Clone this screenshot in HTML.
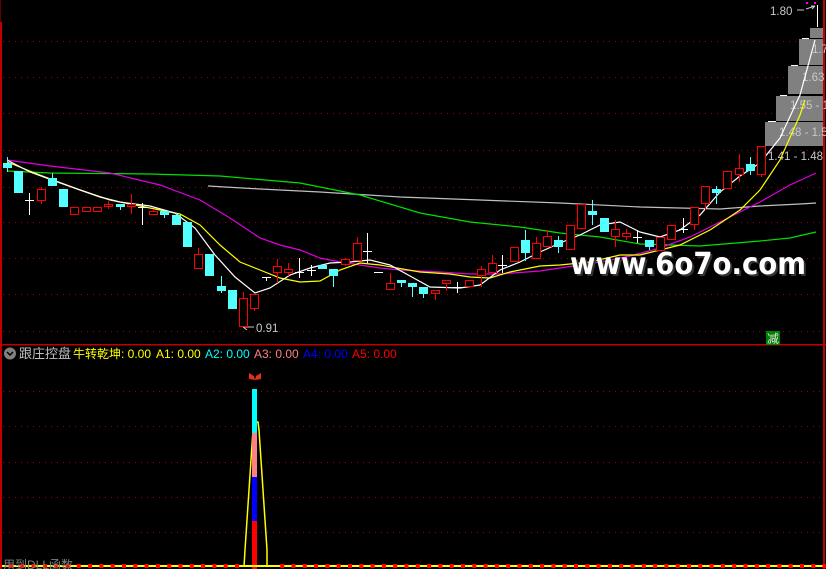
<!DOCTYPE html>
<html><head><meta charset="utf-8"><style>
html,body{margin:0;padding:0;background:#000;}
body{width:826px;height:569px;overflow:hidden;position:relative;font-family:"Liberation Sans","Noto Sans CJK SC",sans-serif;}
svg{position:absolute;left:0;top:0;}
</style></head><body>
<svg width="826" height="569" viewBox="0 0 826 569" xmlns="http://www.w3.org/2000/svg">
<g stroke="#a00000" stroke-width="1" stroke-dasharray="1,5">
<line x1="3" y1="41.5" x2="824" y2="41.5"/><line x1="3" y1="77.5" x2="824" y2="77.5"/>
<line x1="3" y1="113.5" x2="824" y2="113.5"/><line x1="3" y1="150.5" x2="824" y2="150.5"/>
<line x1="3" y1="187.5" x2="824" y2="187.5"/><line x1="3" y1="222.5" x2="824" y2="222.5"/>
<line x1="3" y1="258.5" x2="824" y2="258.5"/><line x1="3" y1="294.5" x2="824" y2="294.5"/>
<line x1="3" y1="331.5" x2="824" y2="331.5"/>
<line x1="3" y1="391.5" x2="824" y2="391.5"/><line x1="3" y1="426.5" x2="824" y2="426.5"/>
<line x1="3" y1="462.5" x2="824" y2="462.5"/><line x1="3" y1="497.5" x2="824" y2="497.5"/>
<line x1="3" y1="532.5" x2="824" y2="532.5"/>
</g>
<rect x="0" y="22" width="2" height="547" fill="#c00000"/>
<rect x="0" y="0" width="1" height="22" fill="#600000"/>
<rect x="823" y="0" width="2" height="569" fill="#c00000"/>
<rect x="0" y="344" width="826" height="1.5" fill="#c00000"/>

<g fill="#808080">
<rect x="810" y="28" width="13" height="10"/>
<rect x="799" y="39" width="24" height="26"/>
<rect x="788" y="66" width="35" height="28"/>
<rect x="776" y="96" width="47" height="25"/>
<rect x="765" y="122" width="58" height="24"/>
</g>
<g stroke="#fff" stroke-width="1">
<line x1="802" y1="38.5" x2="809" y2="38.5"/><line x1="791" y1="65.5" x2="798" y2="65.5"/>
<line x1="780" y1="95.5" x2="787" y2="95.5"/><line x1="768" y1="121.5" x2="776" y2="121.5"/>
<line x1="817.5" y1="5" x2="817.5" y2="27"/>
</g>
<path d="M797 10 H804 M806 9 L815 6 M815 6 l-4 0 M815 6 l-3 3" stroke="#c8c8c8" fill="none"/>
<g fill="#c8c8c8" font-size="11.5" font-family="Liberation Sans,sans-serif">
<text x="770" y="15">1.80</text>
<text x="812" y="53">1.7</text>
<text x="802" y="81">1.63</text>
<text x="790" y="109">1.55 - 1</text>
<text x="779" y="136">1.48 - 1.5</text>
<text x="768" y="160">1.41 - 1.48</text>
<text x="256" y="332">0.91</text>
</g>
<path d="M243 327 H254 M243 327 l4 -3 M243 327 l4 3" stroke="#c8c8c8" fill="none"/>
<rect x="806" y="2" width="2" height="2" fill="#f0f"/><rect x="814" y="2" width="2" height="2" fill="#f0f"/>

<g fill="none" stroke-width="1.2">
<polyline stroke="#c0c0c0" points="208,186 260,189 320,192 400,197 480,200 560,203 640,207 680,208 720,209 760,206 800,204 816,203"/>
<polyline stroke="#00e000" points="7,171 50,173 150,174 220,176 300,183 360,195 420,213 470,222 520,227 560,233 600,237 640,244 700,246 760,241 790,238 816,232"/>
<polyline stroke="#e000e0" points="7,160 50,166 110,173 160,185 200,200 230,218 260,238 280,245 300,250 320,258 340,262 360,265 380,268 400,270 440,272 470,274 500,274 540,271 560,268 600,262 630,256 660,248 690,237 720,222 760,202 790,185 816,173"/>
<polyline stroke="#ffff00" points="7,162 40,175 80,190 110,200 150,208 180,214 200,225 220,245 240,262 260,270 280,278 300,282 320,281 340,270 360,263 380,265 420,272 450,274 470,277 490,278 510,272 540,266 560,265 590,262 620,255 640,255 680,245 710,230 740,210 760,190 780,160 800,115 805,100"/>
<polyline stroke="#ffffff" points="7,160 30,172 52,180 100,197 120,202 150,206 175,213 195,228 215,255 235,277 255,293 270,288 290,275 310,268 330,263 350,262 370,260 390,265 410,276 430,287 460,288 480,285 500,270 520,262 540,252 560,243 580,235 600,225 620,222 640,232 660,237 680,230 700,215 720,192 740,176 760,163 780,138 800,95 815,40"/>
</g>

<g id="c"></g>

<text x="572" y="276" font-family="DejaVu Sans,sans-serif" font-weight="bold" font-size="30" fill="#333" textLength="236" lengthAdjust="spacingAndGlyphs">www.6o7o.com</text>
<text x="570" y="274" font-family="DejaVu Sans,sans-serif" font-weight="bold" font-size="30" fill="#fff" textLength="236" lengthAdjust="spacingAndGlyphs">www.6o7o.com</text>
<rect x="766" y="331" width="14" height="14" fill="#008000"/>
<text x="767" y="343" font-size="12" fill="#e0e0e0" font-family="Noto Sans CJK SC,sans-serif">减</text>

<circle cx="10" cy="353.5" r="6" fill="#808080"/>
<path d="M7 352 l3 3 l3 -3" stroke="#000" stroke-width="1.5" fill="none"/>
<g font-size="12" font-family="Liberation Sans,Noto Sans CJK SC,sans-serif">
<text x="19" y="358" fill="#c0c0c0" font-size="13">跟庄控盘</text>
<text x="73" y="358" fill="#ffff00">牛转乾坤: 0.00</text>
<text x="156" y="358" fill="#ffff00">A1: 0.00</text>
<text x="205" y="358" fill="#00ffff">A2: 0.00</text>
<text x="254" y="358" fill="#ff8080">A3: 0.00</text>
<text x="303" y="358" fill="#0000ff">A4: 0.00</text>
<text x="352" y="358" fill="#ff0000">A5: 0.00</text>
</g>

<path d="M249 373 l5 3 l1 4 l-6 -1 z M261 373 l-5 3 l-1 4 l6 -1 z" fill="#e03020"/>
<polyline fill="none" stroke="#ffff00" stroke-width="1.5" points="244,567 245,550 246,535 247,520 248,505 249,490 250,475 251,460 252,445 253,430 254,422 258,422 259,430 260,445 261,460 262,475 263,490 264,505 265,520 266,535 267,550 267,567"/>
<rect x="252" y="389" width="5" height="45" fill="#00ffff"/>
<rect x="252" y="433" width="5" height="45" fill="#ff8080"/>
<rect x="252" y="477" width="5" height="45" fill="#0000ff"/>
<rect x="252" y="521" width="5" height="48" fill="#ff0000"/>
<rect x="2" y="565" width="821" height="2" fill="#ffff00"/>
<g id="sq" fill="#ff0000"></g>
<text x="3" y="569" font-size="12" fill="#808080" font-family="Liberation Sans,Noto Sans CJK SC,sans-serif">用到DLL函数</text>
</svg>
<script>
var C=[
[7,'c',163,168,157,172],[18,'c',171,193,171,193],[29,'w',200,200,193,215],[41,'r',189,201,187,204],[52,'c',178,186,173,186],[63,'c',189,207,189,207],[74,'r',207,215,207,215],[86,'r',207,212,207,212],[97,'r',207,212,207,212],[108,'r',204,207,201,209],[120,'c',204,207,204,210],[131,'r',204,207,194,214],[142,'w',207,207,203,225],[153,'r',211,215,209,215],[164,'c',211,215,211,218],[176,'c',215,225,213,225],[187,'c',222,247,222,247],
[198,'r',254,269,248,269],[209,'c',254,276,254,276],[221,'c',286,291,276,293],[232,'c',290,309,290,309],[243,'r',298,327,292,327],[254,'r',294,309,294,311],[266,'w',277,277,277,281],[277,'r',266,273,259,283],
[288,'r',269,273,263,276],[299,'w',272,272,258,278],[311,'w',270,270,265,276],[322,'c',265,269,265,269],[333,'c',269,276,269,287],[345,'r',259,265,258,266],[357,'r',243,261,237,261],[367,'w',251,251,233,263],[378,'w',272,272,272,272],[390,'r',283,290,273,290],[401,'c',280,283,280,287],[412,'c',283,287,283,297],[423,'c',287,294,287,298],[435,'r',290,294,290,300],[446,'r',280,284,280,291],[457,'w',287,287,282,293],[469,'r',280,287,280,287],[481,'r',269,276,266,287],[492,'r',263,273,255,273],[502,'w',265,265,255,273],[514,'r',247,262,247,262],[525,'c',240,253,230,261],[536,'r',243,259,237,259],[547,'r',236,247,230,247],[558,'c',240,247,236,253],
[570,'r',225,250,225,250],[581,'r',204,229,204,229],[592,'c',211,215,200,225],[604,'c',218,232,218,232],[615,'r',229,237,220,247],[626,'r',233,237,229,240],[637,'w',237,237,231,243],[649,'c',240,247,240,250],[660,'r',237,251,237,251],[671,'r',225,240,225,240],[683,'w',229,229,218,233],[694,'r',207,225,207,230],[705,'r',186,204,186,210],[716,'c',189,193,186,204],[727,'r',171,189,171,189],[739,'r',168,175,154,182],[750,'c',164,171,157,175],[761,'r',146,175,146,177]];
var col={c:'#54ffff',r:'#ff0000',w:'#ffffff'},s='';
C.forEach(function(d){var x=d[0],k=d[1],c=col[k],t=d[2],b=d[3],h=d[4],l=d[5];
s+='<line x1="'+(x+.5)+'" y1="'+h+'" x2="'+(x+.5)+'" y2="'+l+'" stroke="'+c+'"/>';
if(k=='w'){s+='<line x1="'+(x-4)+'" y1="'+(t+.5)+'" x2="'+(x+5)+'" y2="'+(t+.5)+'" stroke="#fff"/>';}
else if(k=='c'){s+='<rect x="'+(x-4)+'" y="'+t+'" width="9" height="'+Math.max(b-t,2)+'" fill="'+c+'"/>';}
else{s+='<rect x="'+(x-3.5)+'" y="'+(t+.5)+'" width="8" height="'+Math.max(b-t-1,2)+'" fill="#000" stroke="'+c+'"/>';}});
document.getElementById('c').innerHTML=s;
var q='';for(var x=9;x<823;x+=11.3){if(x>240&&x<270)continue;q+='<rect x="'+x.toFixed(1)+'" y="564" width="4" height="4"/>';}
document.getElementById('sq').innerHTML=q;
</script>
</body></html>
